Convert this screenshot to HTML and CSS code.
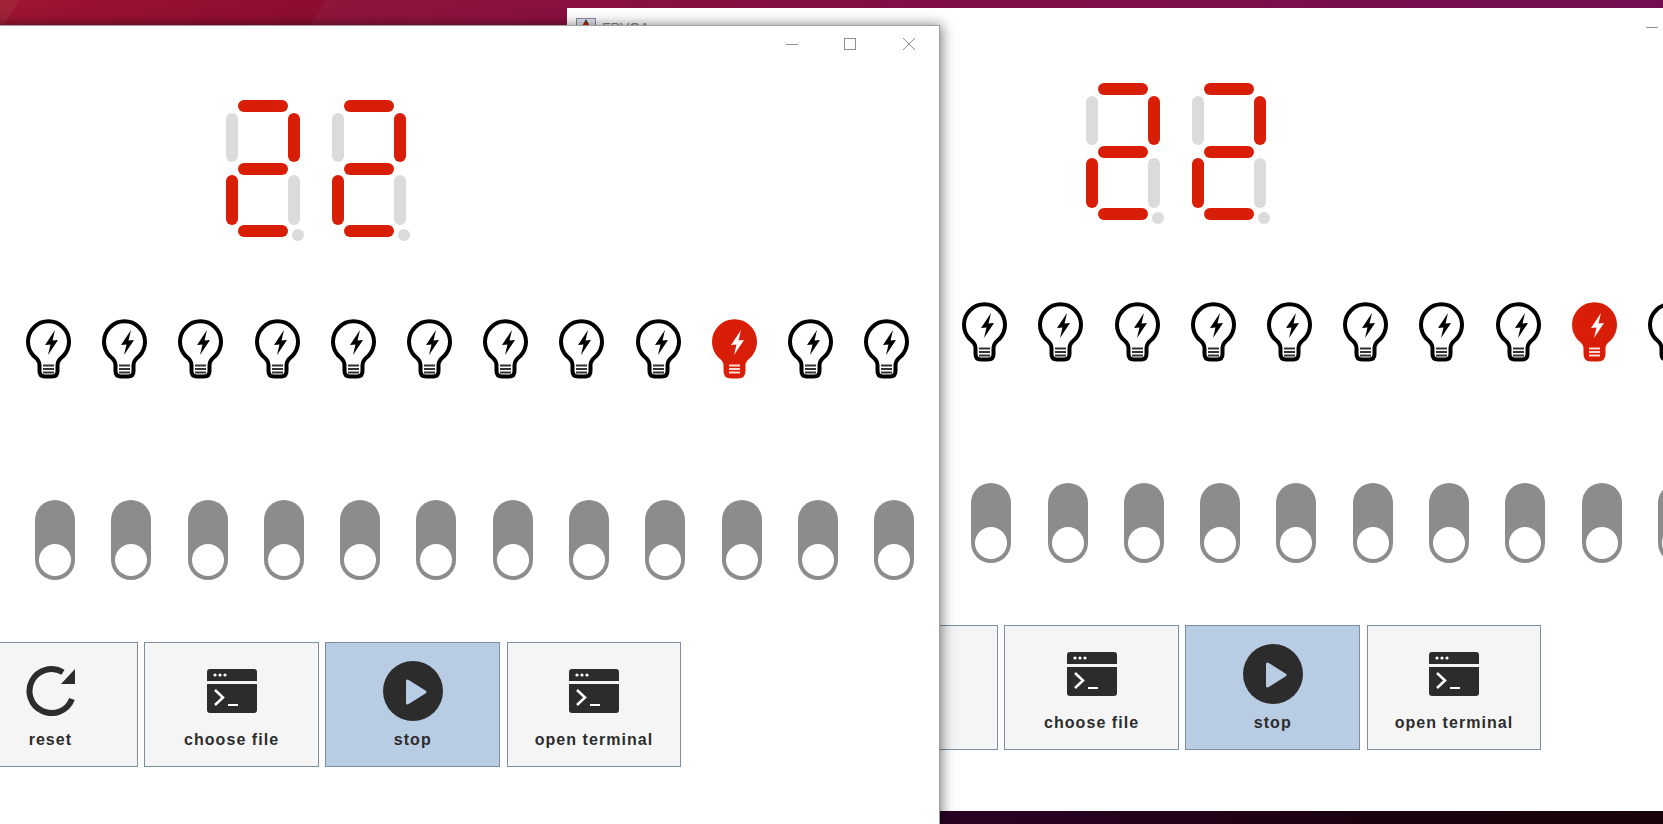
FILE: index.html
```html
<!DOCTYPE html>
<html>
    <head>
        <meta charset="UTF-8">
        <meta name="viewport" content="width=device-width, initial-scale=1.0">
        <title>FPVGA</title>
        <link rel="stylesheet" href="styles.css">
    </head>
    <body>
        <svg class="defs" width="0" height="0">
            <symbol id="digit" viewBox="0 0 78 141">
                <rect class="on" x="12" y="0" width="50" height="12" rx="6"/>
                <rect class="off" x="0" y="13" width="12" height="49" rx="6"/>
                <rect class="on" x="62" y="13" width="12" height="49" rx="6"/>
                <rect class="on" x="12" y="63" width="50" height="12" rx="6"/>
                <rect class="on" x="0" y="75" width="12" height="50" rx="6"/>
                <rect class="off" x="62" y="75" width="12" height="50" rx="6"/>
                <rect class="on" x="12" y="125" width="50" height="12" rx="6"/>
                <circle class="off" cx="72" cy="135" r="6"/>
            </symbol>
            <symbol id="bulb" viewBox="0 0 45 60">
                <path class="glass" d="M13.5 46C13.5 41.500 10.500 39.500 7.700 37A20.500 20.500 0 1 1 37.300 37C34.500 39.500 31.500 41.500 31.500 46V52Q31.500 57.500 26 57.500H19Q13.500 57.500 13.500 52Z"/>
                <polygon class="bolt" points="29,11 19,26 24.500,25.500 22,36 32,21 26.500,21.500"/>
                <path class="stripes" d="M17 46.500H28M17 50H28M17 53.500H28"/>
            </symbol>
            <symbol id="terminal" viewBox="0 0 50 44">
                <path fill="#2c2c2c" d="M3 0H47A3 3 0 0 1 50 3V12H0V3A3 3 0 0 1 3 0ZM0 15H50V41A3 3 0 0 1 47 44H3A3 3 0 0 1 0 41Z"/>
                <circle fill="#fff" cx="8" cy="6" r="1.6"/>
                <circle fill="#fff" cx="13" cy="6" r="1.6"/>
                <circle fill="#fff" cx="18" cy="6" r="1.6"/>
                <path fill="none" stroke="#fff" stroke-width="2.5" d="M8 21L16 28.500L8 36"/>
                <rect fill="#fff" x="21" y="35" width="10" height="2"/>
            </symbol>
            <symbol id="reset" viewBox="0 0 50 50">
                <path fill="none" stroke="#2c2c2c" stroke-width="6" d="M47 33A22 22 0 1 1 38 6.300"/>
                <polygon fill="#2c2c2c" points="50,3 50,18 36,18"/>
            </symbol>
            <symbol id="play" viewBox="0 0 60 60">
                <circle fill="#2c2c2c" cx="30" cy="30" r="30"/>
                <polygon fill="#b8cde4" stroke="#b8cde4" stroke-width="3" stroke-linejoin="round" points="24.500,20 42,31 24.500,42"/>
            </symbol>
        </svg>

        <div class="desktop">
            <div class="window back">
                <div class="titlebar">
                    <svg class="app-icon" viewBox="0 0 20 20">
                        <rect x="0.5" y="0.5" width="19" height="19" fill="#e4e6f0" stroke="#8a8fa8"/>
                        <path d="M10 1L16 12H4Z" fill="#444"/>
                        <circle cx="10" cy="7" r="2.5" fill="#d81e06"/>
                    </svg>
                    <span class="app-name">FPVGA</span>
                    <div class="controls">
                        <span class="min"></span>
                        <span class="max"></span>
                        <svg class="close" viewBox="0 0 12 12"><path d="M0 0L12 12M12 0L0 12"/></svg>
                    </div>
                </div>
                <div class="digits">
                    <svg class="digit"><use href="#digit"/></svg>
                    <svg class="digit"><use href="#digit"/></svg>
                </div>
                <div class="lamps">
                    <svg class="lamp"><use href="#bulb"/></svg>
                    <svg class="lamp"><use href="#bulb"/></svg>
                    <svg class="lamp"><use href="#bulb"/></svg>
                    <svg class="lamp"><use href="#bulb"/></svg>
                    <svg class="lamp"><use href="#bulb"/></svg>
                    <svg class="lamp"><use href="#bulb"/></svg>
                    <svg class="lamp"><use href="#bulb"/></svg>
                    <svg class="lamp"><use href="#bulb"/></svg>
                    <svg class="lamp"><use href="#bulb"/></svg>
                    <svg class="lamp lit"><use href="#bulb"/></svg>
                    <svg class="lamp"><use href="#bulb"/></svg>
                    <svg class="lamp"><use href="#bulb"/></svg>
                </div>
                <div class="switches">
                    <div class="switch"></div>
                    <div class="switch"></div>
                    <div class="switch"></div>
                    <div class="switch"></div>
                    <div class="switch"></div>
                    <div class="switch"></div>
                    <div class="switch"></div>
                    <div class="switch"></div>
                    <div class="switch"></div>
                    <div class="switch"></div>
                    <div class="switch"></div>
                    <div class="switch"></div>
                </div>
                <div class="buttons">
                    <div class="button"><svg class="icon-reset"><use href="#reset"/></svg><p>reset</p></div>
                    <div class="button"><svg class="icon-terminal"><use href="#terminal"/></svg><p>choose file</p></div>
                    <div class="button active"><svg class="icon-play"><use href="#play"/></svg><p>stop</p></div>
                    <div class="button"><svg class="icon-terminal"><use href="#terminal"/></svg><p>open terminal</p></div>
                </div>
            </div>

            <div class="window front">
                <div class="titlebar">
                    <div class="controls">
                        <span class="min"></span>
                        <span class="max"></span>
                        <svg class="close" viewBox="0 0 12 12"><path d="M0 0L12 12M12 0L0 12"/></svg>
                    </div>
                </div>
                <div class="digits">
                    <svg class="digit"><use href="#digit"/></svg>
                    <svg class="digit"><use href="#digit"/></svg>
                </div>
                <div class="lamps">
                    <svg class="lamp"><use href="#bulb"/></svg>
                    <svg class="lamp"><use href="#bulb"/></svg>
                    <svg class="lamp"><use href="#bulb"/></svg>
                    <svg class="lamp"><use href="#bulb"/></svg>
                    <svg class="lamp"><use href="#bulb"/></svg>
                    <svg class="lamp"><use href="#bulb"/></svg>
                    <svg class="lamp"><use href="#bulb"/></svg>
                    <svg class="lamp"><use href="#bulb"/></svg>
                    <svg class="lamp"><use href="#bulb"/></svg>
                    <svg class="lamp lit"><use href="#bulb"/></svg>
                    <svg class="lamp"><use href="#bulb"/></svg>
                    <svg class="lamp"><use href="#bulb"/></svg>
                </div>
                <div class="switches">
                    <div class="switch"></div>
                    <div class="switch"></div>
                    <div class="switch"></div>
                    <div class="switch"></div>
                    <div class="switch"></div>
                    <div class="switch"></div>
                    <div class="switch"></div>
                    <div class="switch"></div>
                    <div class="switch"></div>
                    <div class="switch"></div>
                    <div class="switch"></div>
                    <div class="switch"></div>
                </div>
                <div class="buttons">
                    <div class="button"><svg class="icon-reset"><use href="#reset"/></svg><p>reset</p></div>
                    <div class="button"><svg class="icon-terminal"><use href="#terminal"/></svg><p>choose file</p></div>
                    <div class="button active"><svg class="icon-play"><use href="#play"/></svg><p>stop</p></div>
                    <div class="button"><svg class="icon-terminal"><use href="#terminal"/></svg><p>open terminal</p></div>
                </div>
            </div>
        </div>
    </body>
</html>
```

FILE: styles.css
```css
*{
    box-sizing: border-box;
    font-family: "Liberation Sans", Arial, sans-serif;
}

body{
    margin: 0;
    overflow: hidden;
}

.defs{
    position: absolute;
}

.desktop{
    position: relative;
    width: 1663px;
    height: 824px;
    overflow: hidden;
    background:
        linear-gradient(to right, #2a0222 1000px, #1a020f 1400px, #180308) 0 100% / 100% 13px no-repeat,
        linear-gradient(123deg, #a02238 16px, #9c1431 17px, #8c0d30 272px, #90153a 274px, #8a1040 470px, #700f50 1395px);
}

.window{
    position: absolute;
    width: 1233px;
    height: 803px;
    background-color: white;
}

.back{
    left: 567px;
    top: 8px;
}

.front{
    left: -293px;
    top: 25px;
    box-shadow: inset 0 1px 0 #a0a0a0, inset -1px 0 0 #a0a0a0, 2px 0 12px rgba(0, 0, 0, 0.5);
}

.titlebar{
    position: relative;
    height: 32px;
    padding: 7px 0 0 9px;
    display: flex;
    align-items: center;
    gap: 6px;
}

.app-icon{
    width: 20px;
    height: 20px;
}

.app-name{
    font-size: 14px;
    color: #808080;
}

.controls{
    position: absolute;
    left: 1079px;
    top: 13px;
    display: flex;
    align-items: center;
    gap: 46px;
}

.min{
    width: 12px;
    height: 1px;
    background-color: #909090;
}

.max{
    width: 12px;
    height: 12px;
    border: 1px solid #909090;
}

.close{
    width: 12px;
    height: 12px;
    margin-left: 1px;
}

.close path{
    stroke: #909090;
    stroke-width: 1;
    fill: none;
}

.digits{
    display: flex;
    gap: 28px;
    margin: 43px 0 0 519px;
}

.digit{
    width: 78px;
    height: 141px;
}

.on{
    fill: #d81e06;
}

.off{
    fill: #dbdbdb;
}

.lamps{
    display: flex;
    gap: 31.2px;
    margin: 78px 0 0 319px;
}

.lamp{
    width: 45px;
    height: 60px;
    --glass: none;
    --mark: #000;
    --line: #000;
    --stripe: #333;
}

.lamp.lit{
    --glass: #d81e06;
    --mark: #fff;
    --line: #d81e06;
    --stripe: #fbd9d4;
}

.glass{
    fill: var(--glass);
    stroke: var(--line);
    stroke-width: 4;
}

.bolt{
    fill: var(--mark);
}

.stripes{
    fill: none;
    stroke: var(--stripe);
    stroke-width: 2;
}

.switches{
    display: flex;
    gap: 36.3px;
    margin: 121px 0 0 328px;
}

.switch{
    width: 40px;
    height: 80px;
    border-radius: 20px;
    background-color: #8c8c8c;
    padding: 44px 4px 4px;
}

.switch::after{
    content: "";
    display: block;
    width: 32px;
    height: 32px;
    border-radius: 50%;
    background-color: white;
}

.buttons{
    display: flex;
    gap: 6.4px;
    margin: 62px 0 0 256px;
}

.button{
    width: 174.8px;
    height: 125px;
    background-color: #f5f5f5;
    border: 1px solid #7c8ea3;
    display: flex;
    flex-direction: column;
    align-items: center;
    justify-content: flex-end;
}

.button.active{
    background-color: #b8cde4;
}

.button p{
    margin: 0 0 18px;
    font-size: 16px;
    line-height: 17px;
    font-weight: bold;
    letter-spacing: 1.05px;
    color: #2c2c2c;
}

.icon-reset{
    width: 50px;
    height: 50px;
    margin-bottom: 15px;
}

.icon-terminal{
    width: 50px;
    height: 44px;
    margin-bottom: 18px;
}

.icon-play{
    width: 60px;
    height: 60px;
    margin-bottom: 10px;
}
```
